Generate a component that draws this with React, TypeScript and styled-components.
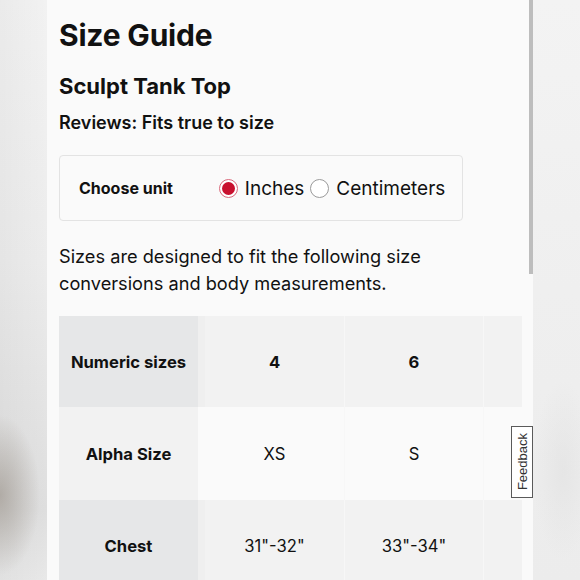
import React, { useState } from 'react';
import styled, { createGlobalStyle } from 'styled-components';

const GlobalStyle = createGlobalStyle`
  html, body {
    margin: 0;
    padding: 0;
    width: 580px;
    height: 580px;
    overflow: hidden;
    font-family: Inter, "Noto Sans", "Liberation Sans", sans-serif;
    color: #111;
  }
  * { box-sizing: border-box; }
`;

const Screen = styled.div`
  display: flex;
  width: 580px;
  height: 580px;
  overflow: hidden;
`;

const Backdrop = styled.div<{ side: 'left' | 'right' }>`
  flex: 0 0 47px;
  height: 100%;
  background: ${p => p.side === 'left'
    ? `radial-gradient(ellipse 40px 80px at 0px 495px, rgba(160, 153, 145, 0.7), rgba(160, 153, 145, 0) 100%),
       linear-gradient(90deg, rgba(0, 0, 0, 0.03), rgba(0, 0, 0, 0) 100%),
       linear-gradient(180deg, #f2f2f2 0%, #ececec 45%, #e4e4e4 70%, #dedede 88%, #e8e8e8 100%)`
    : `radial-gradient(ellipse 30px 90px at 30px 470px, rgba(220, 220, 220, 0.45), rgba(220, 220, 220, 0) 100%),
       linear-gradient(180deg, #f3f3f3 0%, #efefef 50%, #ececec 100%)`};
`;

const Panel = styled.div`
  position: relative;
  flex: 0 0 486px;
  height: 100%;
  background: #fafafa;
  padding: 17px 11px 0 12px;
  overflow: hidden;
`;

const ScrollThumb = styled.div`
  position: absolute;
  top: 0;
  right: 0;
  width: 4px;
  height: 274px;
  background: #bdbdbd;
`;

const Title = styled.h1`
  margin: 0;
  font-size: 30px;
  line-height: 36px;
  font-weight: 700;
  letter-spacing: -0.2px;
`;

const ProductName = styled.h2`
  margin: 20px 0 0;
  font-size: 22px;
  line-height: 26px;
  font-weight: 700;
`;

const Reviews = styled.p`
  margin: 13px 0 0;
  font-size: 18px;
  line-height: 22px;
  font-weight: 600;
`;

const UnitBox = styled.div`
  margin-top: 21px;
  width: 404px;
  height: 66px;
  border: 1px solid #e3e3e3;
  border-radius: 4px;
  display: flex;
  align-items: center;
  padding-left: 19px;
  gap: 46px;
`;

const UnitLabel = styled.span`
  font-size: 16px;
  font-weight: 700;
`;

const RadioGroup = styled.div`
  display: flex;
  align-items: center;
  gap: 6px;
`;

const RadioOption = styled.label`
  display: flex;
  align-items: center;
  gap: 7px;
  font-size: 19px;
  cursor: pointer;
`;

const RadioCircle = styled.span<{ checked: boolean }>`
  width: 19px;
  height: 19px;
  border-radius: 50%;
  background: #fff;
  border: 1px solid ${p => (p.checked ? '#d9687a' : '#9a9a9a')};
  display: flex;
  align-items: center;
  justify-content: center;

  &::after {
    content: '';
    width: 13px;
    height: 13px;
    border-radius: 50%;
    background: ${p => (p.checked ? '#c8102e' : 'transparent')};
  }
`;

const Intro = styled.p`
  margin: 22px 0 0;
  font-size: 18.2px;
  line-height: 27px;
  font-weight: 400;
`;

const Table = styled.div`
  margin-top: 19px;
  width: 463px;
  overflow: hidden;
`;

const Row = styled.div<{ shaded: boolean }>`
  display: flex;
  height: ${p => (p.shaded ? 91 : 93)}px;
`;

const LabelCell = styled.div<{ shaded: boolean }>`
  flex: 0 0 146px;
  display: flex;
  align-items: center;
  justify-content: center;
  font-size: 16.6px;
  font-weight: 700;
  background: ${p => (p.shaded ? '#e6e7e8' : '#f2f2f2')};
  border-right: 7px solid ${p => (p.shaded ? '#efefef' : '#fafafa')};
`;

const ValueCell = styled.div<{ shaded: boolean; bold?: boolean }>`
  flex: 0 0 139px;
  display: flex;
  align-items: center;
  justify-content: center;
  font-size: 16.6px;
  font-weight: ${p => (p.bold ? 700 : 400)};
  background: ${p => (p.shaded ? '#f2f2f2' : 'transparent')};
  & + & {
    border-left: 1px solid ${p => (p.shaded ? '#f7f7f7' : 'transparent')};
  }
`;

const FeedbackTab = styled.button`
  position: absolute;
  right: 0;
  top: 426px;
  width: 22px;
  height: 72px;
  padding: 0;
  background: #fff;
  border: 1.5px solid #5a5a5a;
  display: flex;
  align-items: center;
  justify-content: center;
  cursor: pointer;

  span {
    writing-mode: vertical-rl;
    transform: rotate(180deg);
    font-family: "Liberation Sans", Arial, sans-serif;
    font-size: 13px;
    color: #333;
  }
`;

// the fourth column is only the clipped start of the next size
const rows = [
  { label: 'Numeric sizes', values: ['4', '6', ''], shaded: true, bold: true },
  { label: 'Alpha Size', values: ['XS', 'S', ''], shaded: false, bold: false },
  { label: 'Chest', values: ['31"-32"', '33"-34"', ''], shaded: true, bold: false },
];

const App: React.FC = () => {
  const [unit, setUnit] = useState<'in' | 'cm'>('in');

  return (
    <>
      <GlobalStyle />
      <Screen>
        <Backdrop side="left" />
        <Panel>
          <Title>Size Guide</Title>
          <ProductName>Sculpt Tank Top</ProductName>
          <Reviews>Reviews: Fits true to size</Reviews>

          <UnitBox>
            <UnitLabel>Choose unit</UnitLabel>
            <RadioGroup>
              <RadioOption onClick={() => setUnit('in')}>
                <RadioCircle checked={unit === 'in'} />
                Inches
              </RadioOption>
              <RadioOption onClick={() => setUnit('cm')}>
                <RadioCircle checked={unit === 'cm'} />
                Centimeters
              </RadioOption>
            </RadioGroup>
          </UnitBox>

          <Intro>
            Sizes are designed to fit the following size conversions and body measurements.
          </Intro>

          <Table>
            {rows.map(row => (
              <Row key={row.label} shaded={row.shaded}>
                <LabelCell shaded={row.shaded}>{row.label}</LabelCell>
                {row.values.map((v, i) => (
                  <ValueCell key={i} shaded={row.shaded} bold={row.bold}>{v}</ValueCell>
                ))}
              </Row>
            ))}
          </Table>

          <ScrollThumb />
          <FeedbackTab>
            <span>Feedback</span>
          </FeedbackTab>
        </Panel>
        <Backdrop side="right" />
      </Screen>
    </>
  );
};

export default App;
